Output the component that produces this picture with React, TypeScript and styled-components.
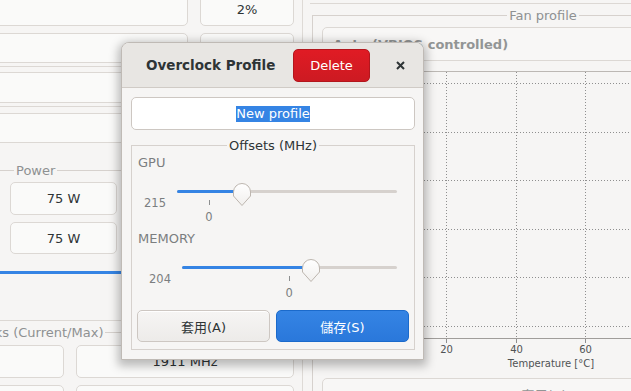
import React from 'react';
import styled, { createGlobalStyle } from 'styled-components';

const GlobalStyle = createGlobalStyle`
  html, body { margin: 0; padding: 0; }
  body {
    background: #f6f5f4;
    font-family: "DejaVu Sans", "Noto Sans CJK TC", sans-serif;
    font-size: 13px;
    color: #2e3436;
  }
  * { box-sizing: border-box; }
`;

const Page = styled.div`
  position: relative;
  width: 631px;
  height: 391px;
  overflow: hidden;
  display: flex;
  background: #f6f5f4;
`;

/* ---------- window behind the dialog ---------- */

const LeftPane = styled.div`
  flex: none;
  width: 303px;
  padding-right: 8px;
  border-right: 1px solid #dedad6;
  display: flex;
  flex-direction: column;
`;

const InfoRow = styled.div<{ $top: number; $height: number }>`
  flex: none;
  display: grid;
  grid-template-columns: 198px 94px;
  column-gap: 12px;
  margin: ${p => p.$top}px 0 0 -10px;
  height: ${p => p.$height}px;
`;

const Field = styled.div`
  display: flex;
  align-items: center;
  justify-content: center;
  background: #fafaf9;
  border: 1px solid #dcd8d4;
  border-radius: 5px;
  color: #2e3436;
`;

const Rule = styled.div<{ $top: number }>`
  flex: none;
  height: 1px;
  margin-top: ${p => p.$top}px;
  background: #dcd8d4;
`;

const Frame = styled.div<{ $top: number; $left?: number; $width?: number }>`
  flex: none;
  margin-top: ${p => p.$top}px;
  margin-left: ${p => p.$left ?? 0}px;
  ${p => (p.$width ? `width: ${p.$width}px;` : '')}
  display: flex;
  flex-direction: column;
`;

const FrameHead = styled.div<{ $center?: boolean; $lead?: number; $sides?: boolean; $dim?: boolean }>`
  display: flex;
  height: 16px;
  line-height: 16px;
  color: ${p => (p.$dim ? '#8e9192' : '#2e3436')};
  white-space: nowrap;

  &::before,
  &::after {
    content: '';
    align-self: flex-end;
    height: 8px;
    border-top: 1px solid #d6d1cd;
  }
  &::before {
    flex: ${p => (p.$center ? '1' : `0 0 ${p.$lead ?? 8}px`)};
    ${p => (p.$sides ? 'border-left: 1px solid #d6d1cd;' : '')}
  }
  &::after {
    flex: 1;
    ${p => (p.$sides ? 'border-right: 1px solid #d6d1cd;' : '')}
  }
`;

const FrameLabel = styled.span`
  padding: 0 2px;
`;

const PowerGrid = styled.div`
  display: grid;
  grid-template-columns: 107px 107px;
  grid-template-rows: 33px 32px;
  gap: 7px 12px;
  padding: 3px 0 0 20px;
`;

const LevelBar = styled.div`
  flex: none;
  height: 3px;
  margin: 17px 0 0 -10px;
  background: #3584e4;
`;

const ClockGrid = styled.div`
  display: grid;
  grid-template-columns: 104px 218px;
  grid-auto-rows: 33px;
  gap: 7px 12px;
  padding-top: 4px;
`;

const RightPane = styled.div`
  flex: 1;
  min-width: 0;
  margin-left: 9px;
  display: flex;
  flex-direction: column;
`;

const TopStrip = styled.div`
  flex: none;
  height: 4px;
  margin-left: -2px;
  border-bottom: 1px solid #dcd8d4;
`;

const FanBody = styled.div`
  border-left: 1px solid #d6d1cd;
  border-right: 1px solid #d6d1cd;
  padding-top: 3px;
  display: flex;
  flex-direction: column;
`;

const Dropdown = styled.div`
  height: 34px;
  margin-left: 9px;
  width: 440px;
  padding-left: 10px;
  display: flex;
  align-items: center;
  background: #f8f7f6;
  border: 1px solid #dcd8d4;
  border-radius: 5px;
  font-weight: bold;
  color: #929595;
`;

const ChartSvg = styled.svg`
  display: block;
  font-family: "DejaVu Sans", sans-serif;
`;

const BottomButton = styled.div`
  height: 30px;
  width: 444px;
  margin-left: 9px;
  padding-top: 6px;
  text-align: center;
  border: 1px solid #dcd8d4;
  border-radius: 5px;
  background: #f8f7f6;
  color: #929595;
`;

/* ---------- dialog ---------- */

const Dialog = styled.div`
  position: absolute;
  left: 121px;
  top: 42px;
  width: 303px;
  height: 318px;
  display: flex;
  flex-direction: column;
  background: #f6f5f4;
  border: 1px solid #bfbab5;
  border-radius: 8px 8px 0 0;
  box-shadow: 0 3px 10px 3px rgba(0, 0, 0, 0.26);
  overflow: hidden;
`;

const HeaderBar = styled.div`
  flex: none;
  height: 45px;
  display: flex;
  align-items: center;
  padding: 0 6px 0 24px;
  background: #e8e6e3;
  border-bottom: 1px solid #d0cbc6;
`;

const Title = styled.span`
  font-weight: bold;
  font-size: 13.5px;
  color: #2e3436;
`;

const Button = styled.button<{ $kind?: 'normal' | 'suggested' | 'destructive' }>`
  height: 32px;
  padding: 0;
  font: inherit;
  font-size: 13px;
  border-radius: 5px;
  cursor: pointer;
  border: 1px solid
    ${p => (p.$kind === 'suggested' ? '#1b6acb' : p.$kind === 'destructive' ? '#b2161d' : '#cdc7c2')};
  color: ${p => (p.$kind === 'normal' || !p.$kind ? '#2e3436' : '#ffffff')};
  background: ${p =>
    p.$kind === 'suggested'
      ? 'linear-gradient(to top, #2a78db, #3584e4)'
      : p.$kind === 'destructive'
      ? 'linear-gradient(to top, #cd1a22, #e01b24)'
      : 'linear-gradient(to top, #edebe9, #f6f5f4)'};
  box-shadow: ${p => (p.$kind === 'normal' || !p.$kind ? 'inset 0 1px #ffffff' : 'none')};
`;

const DeleteButton = styled(Button)`
  margin-left: auto;
  width: 77px;
  height: 33px;
`;

const CloseButton = styled.button`
  width: 34px;
  height: 33px;
  margin-left: 13px;
  padding: 0;
  border: none;
  background: transparent;
  display: flex;
  align-items: center;
  justify-content: center;
`;

const DialogBody = styled.div`
  flex: 1;
  padding: 9px 8px 9px 9px;
  display: flex;
  flex-direction: column;
`;

const Entry = styled.div`
  flex: none;
  height: 33px;
  display: flex;
  align-items: center;
  justify-content: center;
  background: #ffffff;
  border: 1px solid #cdc7c2;
  border-radius: 5px;
`;

const Selected = styled.span`
  line-height: 16px;
  background: #3584e4;
  color: #ffffff;
`;

const OffsetsBody = styled.div`
  border: 1px solid #d6d1cd;
  border-top: none;
  padding: 1px 0 7px;
  display: flex;
  flex-direction: column;
`;

const ScaleTitle = styled.div`
  height: 16px;
  line-height: 16px;
  padding-left: 6px;
  color: #7b7e80;
`;

const SliderRow = styled.div<{ $inset: number }>`
  height: 60px;
  display: flex;
  padding-left: ${p => p.$inset}px;
`;

const ScaleValue = styled.span`
  flex: none;
  width: 33px;
  margin-top: 24px;
  height: 16px;
  line-height: 16px;
  font-size: 11.5px;
  color: #7b7e80;
`;

const Trough = styled.div`
  position: relative;
  flex: 1;
  margin-right: 17px;
`;

const Rail = styled.div`
  margin-top: 19px;
  height: 3px;
  border-radius: 2px;
  background: #d6d1cd;
  overflow: hidden;
`;

const Fill = styled.div`
  height: 100%;
  background: #3584e4;
`;

const Knob = styled.svg`
  position: absolute;
  top: 11px;
  margin-left: -10px;
`;

const Tick = styled.div`
  position: absolute;
  top: 29px;
  width: 1px;
  height: 5px;
  background: #8d8f90;
`;

const Mark = styled.span`
  position: absolute;
  top: 38px;
  width: 20px;
  margin-left: -10px;
  text-align: center;
  line-height: 16px;
  font-size: 11.5px;
  color: #7b7e80;
`;

const ButtonRow = styled.div`
  margin-top: 3px;
  padding: 0 5px;
  display: grid;
  grid-template-columns: 1fr 1fr;
  gap: 6px;
`;

function Slider({ value, inset, pos, zero }: { value: string; inset: number; pos: number; zero: number }) {
  return (
    <SliderRow $inset={inset}>
      <ScaleValue>{value}</ScaleValue>
      <Trough>
        <Rail>
          <Fill style={{ width: `${pos}%` }} />
        </Rail>
        <Tick style={{ left: `${zero}%` }} />
        <Mark style={{ left: `${zero}%` }}>0</Mark>
        <Knob width="20" height="25" viewBox="0 0 20 25" style={{ left: `${pos}%` }}>
          <defs>
            <linearGradient id="kg" x1="0" y1="0" x2="0" y2="1">
              <stop offset="0" stopColor="#ffffff" />
              <stop offset="1" stopColor="#f1efed" />
            </linearGradient>
          </defs>
          <path
            d="M10 1.5 A8.5 8.5 0 0 1 18.5 10 L18.5 14 L10 23.5 L1.5 14 L1.5 10 A8.5 8.5 0 0 1 10 1.5 Z"
            fill="url(#kg)"
            stroke="#bdb6af"
            strokeWidth="1"
          />
        </Knob>
      </Trough>
    </SliderRow>
  );
}

function FanChart() {
  const xs = [63, 133, 203, 272, 342];
  const ys = [22, 71, 119, 168, 216, 265];
  const labels: [number, string][] = [
    [133, '20'],
    [203, '40'],
    [272, '60'],
  ];
  return (
    <ChartSvg width={460} height={317} viewBox="0 0 460 317">
      <line x1={0} x2={460} y1={10.5} y2={10.5} stroke="#bcb8b4" />
      {ys.map(y => (
        <line key={y} x1={0} x2={460} y1={y + 0.5} y2={y + 0.5} stroke="#8f8f8f" strokeDasharray="1 2" />
      ))}
      {xs.map(x => (
        <line key={x} x1={x + 0.5} x2={x + 0.5} y1={11} y2={277} stroke="#8f8f8f" strokeDasharray="1 2" />
      ))}
      <line x1={0} x2={460} y1={277.5} y2={277.5} stroke="#a09d9a" />
      {xs.map(x => (
        <line key={`t${x}`} x1={x + 0.5} x2={x + 0.5} y1={278} y2={282} stroke="#8f8f8f" />
      ))}
      {labels.map(([x, t]) => (
        <text key={t} x={x + 0.5} y={292} textAnchor="middle" fontSize="10" fill="#505354">
          {t}
        </text>
      ))}
      <text x={238} y={306} textAnchor="middle" fontSize="10" fill="#505354">
        Temperature [°C]
      </text>
    </ChartSvg>
  );
}

export default function App() {
  return (
    <>
      <GlobalStyle />
      <Page>
        <LeftPane>
          <InfoRow $top={-7} $height={33}>
            <Field />
            <Field>2%</Field>
          </InfoRow>
          <InfoRow $top={7} $height={30}>
            <Field />
            <Field />
          </InfoRow>
          <Rule $top={3} />
          <InfoRow $top={5} $height={31}>
            <Field />
            <Field />
          </InfoRow>
          <Rule $top={3} />
          <InfoRow $top={6} $height={30}>
            <Field />
            <Field />
          </InfoRow>

          <Frame $top={20} $left={-10}>
            <FrameHead $lead={24} $dim>
              <FrameLabel>Power</FrameLabel>
            </FrameHead>
            <PowerGrid>
              <Field>75 W</Field>
              <Field />
              <Field>75 W</Field>
              <Field />
            </PowerGrid>
          </Frame>

          <LevelBar />
          <Rule $top={46} />

          <Frame $top={4} $left={-40}>
            <FrameHead $lead={5} $dim>
              <FrameLabel>Clocks (Current/Max)</FrameLabel>
            </FrameHead>
            <ClockGrid>
              <Field />
              <Field>1911 MHz</Field>
              <Field />
              <Field />
            </ClockGrid>
          </Frame>
        </LeftPane>

        <RightPane>
          <TopStrip />
          <Frame $top={4} $width={462}>
            <FrameHead $center $sides $dim>
              <FrameLabel>Fan profile</FrameLabel>
            </FrameHead>
            <FanBody>
              <Dropdown>Auto (VBIOS controlled)</Dropdown>
              <FanChart />
              <BottomButton>套用(A)</BottomButton>
            </FanBody>
          </Frame>
        </RightPane>

        <Dialog>
          <HeaderBar>
            <Title>Overclock Profile</Title>
            <DeleteButton $kind="destructive">Delete</DeleteButton>
            <CloseButton aria-label="Close">
              <svg width="9" height="9" viewBox="0 0 9 9">
                <path d="M1 1 L8 8 M8 1 L1 8" stroke="#2e3436" strokeWidth="2" strokeLinecap="butt" />
              </svg>
            </CloseButton>
          </HeaderBar>
          <DialogBody>
            <Entry>
              <Selected>New profile</Selected>
            </Entry>
            <Frame $top={8}>
              <FrameHead $center $sides>
                <FrameLabel>Offsets (MHz)</FrameLabel>
              </FrameHead>
              <OffsetsBody>
                <ScaleTitle>GPU</ScaleTitle>
                <Slider value="215" inset={12} pos={29.5} zero={14.5} />
                <ScaleTitle>MEMORY</ScaleTitle>
                <Slider value="204" inset={17} pos={60} zero={49.8} />
                <ButtonRow>
                  <Button $kind="normal">套用(A)</Button>
                  <Button $kind="suggested">儲存(S)</Button>
                </ButtonRow>
              </OffsetsBody>
            </Frame>
          </DialogBody>
        </Dialog>
      </Page>
    </>
  );
}
